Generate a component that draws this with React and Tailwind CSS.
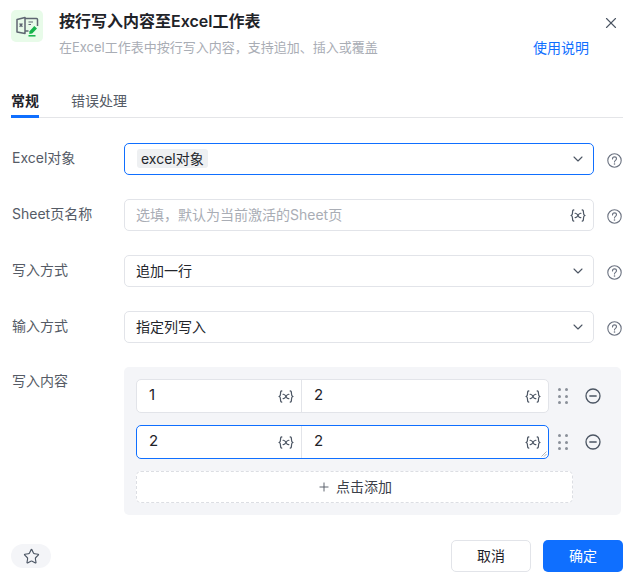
import { ChevronDown, X, Plus, Star } from 'lucide-react';

const font = { fontFamily: 'Inter, "Noto Sans CJK SC", sans-serif' };

const Help = () => (
  <svg width="15" height="15" viewBox="0 0 15 15" fill="none" stroke="#6b7280" strokeWidth="1.1" className="shrink-0">
    <circle cx="7.5" cy="7.5" r="6.7" />
    <path d="M5.5 5.9c0-1.2.9-2 2-2s2 .8 2 1.9c0 1.500-2 1.600-2 3.100" strokeLinecap="round" />
    <circle cx="7.5" cy="11" r=".8" fill="#6b7280" stroke="none" />
  </svg>
);

const Vars = () => (
  <svg width="16" height="13" viewBox="0 0 16 14" fill="none" stroke="#4b5563" strokeWidth="1.300" strokeLinecap="round" className="shrink-0">
    <path d="M3.500 1C2.100 1 2.100 2 2.100 3.800c0 1.800-.3 2.700-1.300 3.200 1 .5 1.300 1.400 1.300 3.200C2.100 12 2.100 13 3.500 13" />
    <path d="M12.500 1c1.400 0 1.400 1 1.400 2.800 0 1.800.3 2.700 1.300 3.200-1 .5-1.300 1.400-1.300 3.200 0 1.800 0 2.800-1.400 2.800" />
    <path d="M4.900 4.600c1.500-.3 2.100.5 3.100 2.400 1 1.900 1.600 2.600 3.100 2.300M11.100 4.600C9.700 4.400 8.900 5.200 8 7 7 8.900 6.300 9.500 4.900 9.300" />
  </svg>
);

const Drag = () => (
  <div className="grid grid-cols-2 gap-x-[4px] gap-y-[3.500px] w-[10px] shrink-0">
    {[0, 1, 2, 3, 4, 5].map((i) => (
      <span key={i} className="w-[3px] h-[3px] rounded-full bg-[#8a9099]" />
    ))}
  </div>
);

const Minus = () => (
  <svg width="16" height="16" viewBox="0 0 16 16" fill="none" stroke="#4b5563" strokeWidth="1.300" className="shrink-0">
    <circle cx="8" cy="8" r="7" />
    <path d="M4.800 8h6.400" strokeLinecap="round" />
  </svg>
);

const Logo = () => (
  <svg width="24" height="24" viewBox="0 0 24 24" fill="none">
    <path d="M10 4.500h11.500a1 1 0 0 1 1 1v6.500" stroke="#5f6672" strokeWidth="1.500" />
    <path d="M13.500 17H10" stroke="#5f6672" strokeWidth="1.500" />
    <path d="M2 5.500 10 3.500v16l-8-1.500z" stroke="#5f6672" strokeWidth="1.500" strokeLinejoin="round" />
    <path d="M4.600 9.500l2.800 3.200M7.400 9.500l-2.800 3.200" stroke="#5f6672" strokeWidth="1.300" />
    <path d="M13.500 8h4.500M13.500 10.500h2.500" stroke="#5f6672" strokeWidth="1.200" />
    <path d="M14.500 17.200l4.800-5.200 2.700 2.400-4.800 5.200-3 .3z" fill="#16b34a" />
    <path d="M13.500 21.800h7" stroke="#16b34a" strokeWidth="1.500" />
  </svg>
);

function Row({ label, children }) {
  return (
    <div className="flex items-start">
      <div className="w-[113px] shrink-0 h-8 pl-[1px] leading-[30px] text-sm text-[#555b66]">{label}</div>
      <div className="w-[470px]">{children}</div>
      <div className="h-8 pl-[13px] flex items-center pt-[2px]"><Help /></div>
    </div>
  );
}

function Select({ children, active }) {
  return (
    <div className={`h-8 rounded-[5px] border bg-white flex items-center justify-between pl-[11px] pr-[7px] text-sm text-[#23262c] ${active ? 'border-[#0f6fff]' : 'border-[#e2e4e9]'}`}>
      <div>{children}</div>
      <ChevronDown size={16} color="#4b5563" strokeWidth={1.600} />
    </div>
  );
}

function Pair({ left, right, active }) {
  return (
    <div className="flex items-center">
      <div className={`relative w-[413px] h-[34px] rounded-[5px] border bg-white flex text-[15px] text-[#1f2329] ${active ? 'border-[#0f6fff]' : 'border-[#e2e4e9]'}`}>
        <div className="w-[165px] pl-3 pr-[7px] flex items-center justify-between border-r border-[#e2e4e9]">
          <span className="-mt-[1px]">{left}</span>
          <Vars />
        </div>
        <div className="flex-1 pl-3 pr-[7px] flex items-center justify-between">
          <span className="-mt-[1px]">{right}</span>
          <Vars />
        </div>
        {active && (
          <svg width="6" height="6" viewBox="0 0 6 6" stroke="#9ca3af" strokeWidth=".8" className="absolute right-[1px] bottom-[1px]">
            <path d="M.5 5.500l5-5M3 5.500l2.500-2.500" />
          </svg>
        )}
      </div>
      <div className="ml-[9px] mr-[17px]"><Drag /></div>
      <Minus />
    </div>
  );
}

export default function App() {
  return (
    <div className="w-[635px] h-[581px] bg-white flex flex-col overflow-hidden" style={font}>
      <div className="flex pl-[11px] pr-3 pt-[10px] h-[86px]">
        <div className="w-8 h-8 rounded-[5px] bg-[#e8fbe9] flex items-center justify-center shrink-0"><Logo /></div>
        <div className="ml-4 flex-1 min-w-0 -mt-[1px]">
          <div className="text-base leading-[24px] font-semibold text-[#1f2329]">按行写入内容至Excel工作表</div>
          <div className="flex items-center justify-between pr-[18px] mt-[1px]">
            <span className="text-[13px] leading-[24px] text-[#a9adb5]">在Excel工作表中按行写入内容，支持追加、插入或覆盖</span>
            <span className="text-sm leading-[24px] text-[#0f6fff] mt-[2px]">使用说明</span>
          </div>
        </div>
        <div className="w-4 h-6 flex items-start -mt-[1px]"><X size={18} color="#4b5563" strokeWidth={1.500} className="mt-[5px] -ml-[5px]" /></div>
      </div>

      <div className="mx-[11px] mr-3 h-[32px] border-b-[1px] border-[#e4e5e8] flex text-sm">
        <div className="w-7 h-[32px] border-b-[3px] border-[#0f6fff] font-semibold text-[#1f2329] leading-[30px]">常规</div>
        <div className="ml-8 leading-[30px] text-[#555b66]">错误处理</div>
      </div>

      <div className="pl-[11px] pt-[25px] flex flex-col gap-6">
        <Row label="Excel对象">
          <Select active><span className="bg-[#eef0f2] rounded-[3px] px-1 py-[1px] ml-[1px]">excel对象</span></Select>
        </Row>
        <Row label="Sheet页名称">
          <div className="h-8 rounded-[5px] border border-[#e2e4e9] bg-white flex items-center justify-between pl-[11px] pr-[7px] text-sm text-[#a9adb5]">
            <span>选填，默认为当前激活的Sheet页</span>
            <Vars />
          </div>
        </Row>
        <Row label="写入方式"><Select>追加一行</Select></Row>
        <Row label="输入方式"><Select>指定列写入</Select></Row>
        <div className="flex items-start">
          <div className="w-[113px] shrink-0 h-8 pl-[1px] leading-[28px] text-sm text-[#555b66]">写入内容</div>
          <div className="w-[497px] h-[148px] rounded-[5px] bg-[#f4f5f8] pt-3 pl-3">
            <div className="flex flex-col gap-3">
              <Pair left="1" right="2" />
              <Pair left="2" right="2" active />
            </div>
            <div className="mt-3 w-[437px] h-8 rounded-[5px] border border-dashed border-[#dcdee3] bg-white flex items-center justify-center gap-[5px] text-sm text-[#3b4049]">
              <Plus size={14} color="#555b66" strokeWidth={1.600} />
              <span>点击添加</span>
            </div>
          </div>
        </div>
      </div>

      <div className="flex items-center justify-between pl-[11px] pr-3 mt-[25px]">
        <div className="w-10 h-6 rounded-full bg-[#f4f5f8] flex items-center justify-center">
          <Star size={17} color="#4b5563" strokeWidth={1.600} />
        </div>
        <div className="flex gap-3 text-sm">
          <div className="w-20 h-8 rounded-[5px] border border-[#e2e4e9] bg-white flex items-center justify-center text-[#1f2329]">取消</div>
          <div className="w-20 h-8 rounded-[5px] bg-[#0f6fff] flex items-center justify-center text-white">确定</div>
        </div>
      </div>
    </div>
  );
}
